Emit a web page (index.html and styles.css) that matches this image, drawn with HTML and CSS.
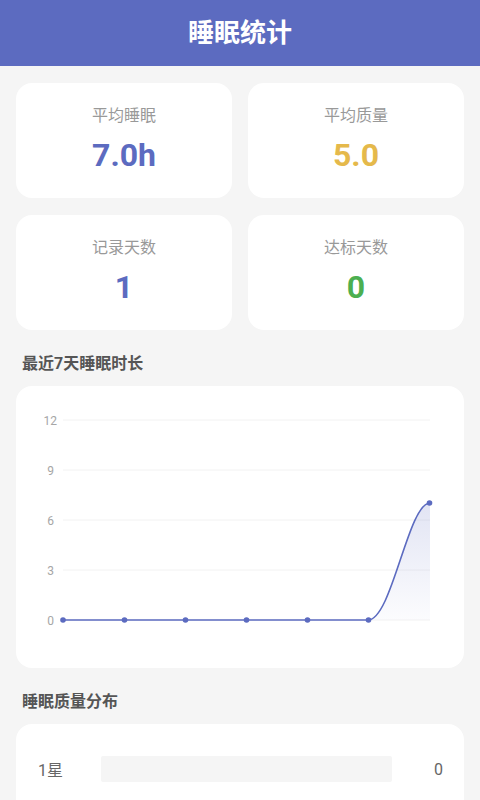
FILE: index.html
```html
<!DOCTYPE html>
<html lang="zh">
<head>
<meta charset="utf-8">
<title>睡眠统计</title>
<link rel="stylesheet" href="styles.css">
</head>
<body>
<header class="topbar"><h1 class="topbar-title">睡眠统计</h1></header>
<main class="content">
  <section class="stats">
    <div class="stat-card"><div class="stat-label">平均睡眠</div><div class="stat-value blue">7.0h</div></div>
    <div class="stat-card"><div class="stat-label">平均质量</div><div class="stat-value yellow">5.0</div></div>
    <div class="stat-card"><div class="stat-label">记录天数</div><div class="stat-value blue">1</div></div>
    <div class="stat-card"><div class="stat-label">达标天数</div><div class="stat-value green">0</div></div>
  </section>

  <h2 class="section-title">最近7天睡眠时长</h2>
  <div class="chart-card">
    <svg class="chart" width="448" height="282" viewBox="16 386 448 282" xmlns="http://www.w3.org/2000/svg">
      <defs>
        <linearGradient id="area" x1="0" y1="0" x2="0" y2="1">
          <stop offset="0" stop-color="#5c6bc0" stop-opacity="0.18"/>
          <stop offset="1" stop-color="#5c6bc0" stop-opacity="0.02"/>
        </linearGradient>
      </defs>
      <g class="grid">
        <line x1="63" y1="420" x2="430" y2="420"/>
        <line x1="63" y1="470" x2="430" y2="470"/>
        <line x1="63" y1="520" x2="430" y2="520"/>
        <line x1="63" y1="570" x2="430" y2="570"/>
        <line x1="63" y1="620" x2="430" y2="620"/>
      </g>
      <g class="axis-label">
        <text x="57" y="424.5">12</text>
        <text x="54" y="474.5">9</text>
        <text x="54" y="524.5">6</text>
        <text x="54" y="574.5">3</text>
        <text x="54" y="624.5">0</text>
      </g>
      <path class="area" d="M368,620 C392,620 408,503 430,503 L430,620 Z"/>
      <path class="line" d="M63,620 L368,620 C392,620 408,503 430,503"/>
      <g class="dots">
        <circle cx="63" cy="620" r="2.8"/>
        <circle cx="124.5" cy="620" r="2.8"/>
        <circle cx="185.5" cy="620" r="2.8"/>
        <circle cx="246.5" cy="620" r="2.8"/>
        <circle cx="307.5" cy="620" r="2.8"/>
        <circle cx="368.5" cy="620" r="2.8"/>
        <circle cx="429.5" cy="503" r="2.8"/>
      </g>
    </svg>
  </div>

  <h2 class="section-title">睡眠质量分布</h2>
  <div class="dist-card">
    <div class="dist-row">
      <span class="dist-label">1星</span>
      <div class="dist-bar"><div class="dist-fill" style="width:0%"></div></div>
      <span class="dist-count">0</span>
    </div>
  </div>
</main>
</body>
</html>
```
FILE: styles.css
```css
* { box-sizing: border-box; }
html, body {
  margin: 0;
  padding: 0;
  background: #f5f5f5;
  font-family: Roboto, "Noto Sans CJK SC", sans-serif;
}
.topbar {
  height: 66px;
  background: #5c6bc0;
  display: flex;
  align-items: center;
  justify-content: center;
}
.topbar-title {
  margin: 0;
  color: #ffffff;
  font-size: 26px;
  font-weight: 700;
  line-height: 1;
}
.content {
  padding: 17px 16px 0 16px;
}
.stats {
  display: grid;
  grid-template-columns: 1fr 1fr;
  column-gap: 16px;
  row-gap: 17px;
}
.stat-card {
  height: 115px;
  background: #ffffff;
  border-radius: 16px;
  padding-top: 22px;
  display: flex;
  flex-direction: column;
  align-items: center;
  gap: 8px;
}
.stat-label {
  font-size: 16px;
  line-height: 22px;
  color: #999999;
}
.stat-value {
  font-size: 32px;
  line-height: 40px;
  font-weight: 700;
}
.blue { color: #5c6bc0; }
.yellow { color: #e5b94b; }
.green { color: #4caf50; }
.section-title {
  margin: 22px 0 10px 6px;
  font-size: 16px;
  line-height: 24px;
  font-weight: 700;
  color: #555555;
}
.chart-card {
  height: 282px;
  background: #ffffff;
  border-radius: 16px;
  overflow: hidden;
}
.chart { display: block; }
.grid line {
  stroke: #f2f2f2;
  stroke-width: 1;
}
.axis-label text {
  font-family: Roboto, sans-serif;
  font-size: 12px;
  fill: #a6a6a6;
  text-anchor: end;
}
.area { fill: url(#area); }
.line {
  fill: none;
  stroke: #5c6bc0;
  stroke-width: 1.6;
}
.dots circle { fill: #5c6bc0; }
.dist-card {
  background: #ffffff;
  border-radius: 16px 16px 0 0;
  padding: 32px 21px 20px 22px;
  min-height: 100px;
}
.dist-row {
  display: flex;
  align-items: center;
  height: 26px;
}
.dist-label {
  width: 63px;
  font-size: 16px;
  color: #666666;
}
.dist-bar {
  flex: 1;
  height: 26px;
  background: #f5f5f5;
  border-radius: 2px;
  overflow: hidden;
}
.dist-fill {
  height: 100%;
  background: #5c6bc0;
}
.dist-count {
  width: 51px;
  text-align: right;
  font-size: 16px;
  color: #666666;
}
```
